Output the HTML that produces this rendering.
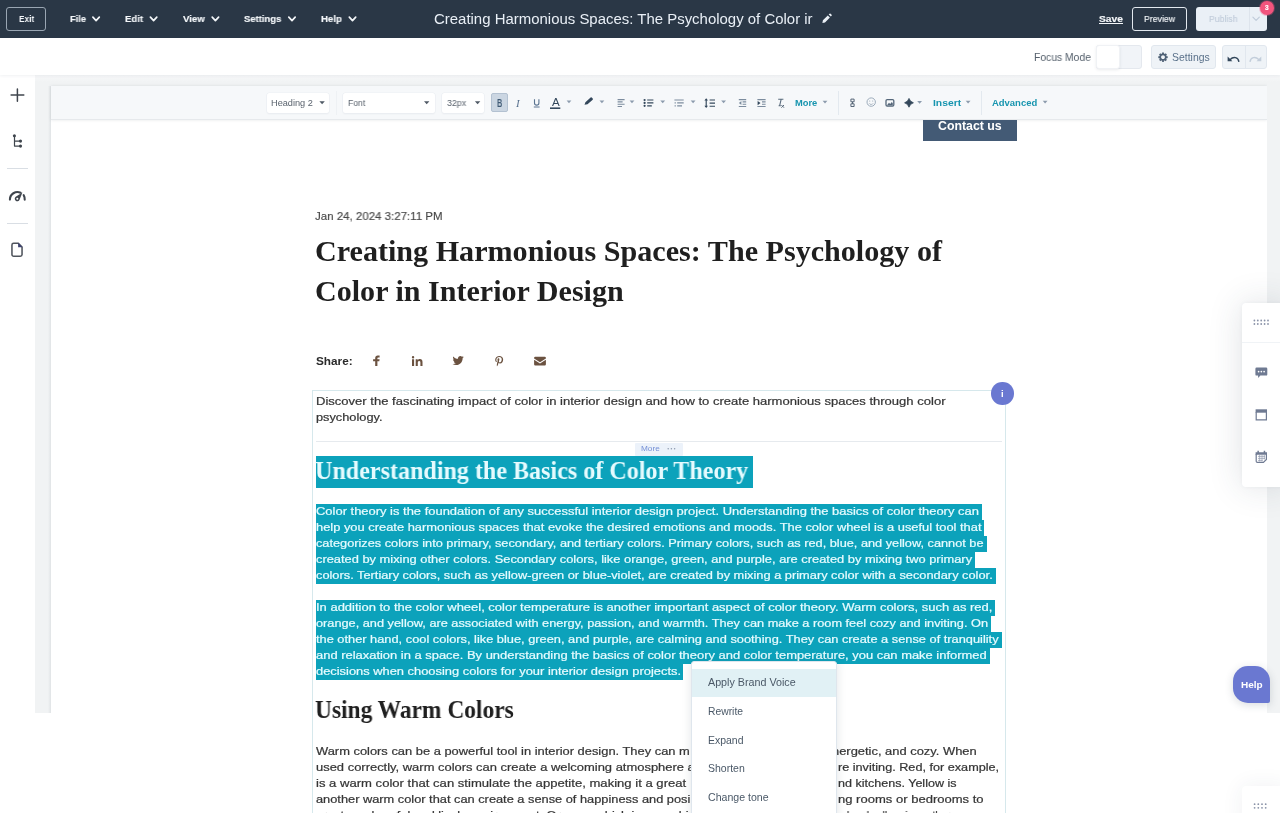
<!DOCTYPE html>
<html lang="en"><head><meta charset="utf-8"><title>Blog editor</title>
<style>
*{box-sizing:border-box;margin:0;padding:0}
html,body{width:1280px;height:813px;overflow:hidden;background:#fff}
body{position:relative;font-family:"Liberation Sans",sans-serif;color:#33475b;-webkit-font-smoothing:antialiased}
.abs{position:absolute}
.t{position:absolute;white-space:nowrap;line-height:16px;height:16px;will-change:transform}
svg{position:absolute;overflow:visible}

/* ---------- top bar ---------- */
#topbar{position:absolute;left:0;top:0;width:1280px;height:38px;background:#2a3746}
#topbar .t{color:#f3f6f9;font-size:9.8px;font-weight:700;-webkit-text-stroke:.15px currentColor}
.btn{position:absolute;border-radius:3px}
#exit{left:6px;top:7px;width:40px;height:24px;border:1px solid #9aa6b3}
#preview{left:1132px;top:7px;width:55px;height:24px;border:1px solid #e3e9ef}
#publish{position:absolute;left:1196px;top:7px;width:71px;height:24px;background:#eaf0f6;border-radius:3px}
#publish i{position:absolute;left:53px;top:0;width:1px;height:24px;background:#dde4ec}
#badge{position:absolute;left:1259.5px;top:.5px;width:14.5px;height:14.5px;border-radius:50%;background:#f2547d;box-shadow:0 0 0 1px rgba(242,84,125,.35)}

/* ---------- sub bar ---------- */
#subbar{position:absolute;left:0;top:38px;width:1280px;height:36.5px;background:#fff;box-shadow:0 1px 3px rgba(45,62,80,.07)}
#toggle{position:absolute;left:1096px;top:45px;width:46px;height:23.5px;border-radius:3px;background:#f1f4f8;border:1px solid #e4e8ee}
#toggle i{position:absolute;left:-1px;top:-1px;width:24px;height:23.5px;border-radius:3px;background:#fff;border:1px solid #f0f2f5;box-shadow:0 1px 3px rgba(45,62,80,.10)}
#settingsbtn{left:1151px;top:45px;width:65px;height:24px;background:#eff3f7;border:1px solid #e1e7ee}
#undoredo{left:1222px;top:45px;width:45px;height:24px;background:#eff3f7;border:1px solid #e1e7ee}
#undoredo i{position:absolute;left:22px;top:0;width:1px;height:22px;background:#e1e7ee}

/* ---------- workspace ---------- */
#work{position:absolute;left:0;top:75px;width:1280px;height:638px;background:linear-gradient(#f7f8f9,#f1f3f4 7px)}
#side{position:absolute;left:0;top:75px;width:35.2px;height:738px;background:#fff}
#side hr{position:absolute;left:7px;width:21px;height:1px;border:0;background:#d9dee4}
#page{position:absolute;left:50.5px;top:86px;width:1216.5px;height:727px;background:#fff}
.pshadow{position:absolute;top:86px;height:627px;width:3px}
#toolbar{position:absolute;left:50.5px;top:86px;width:1216.5px;height:34.2px;background:#f6f8fa;border-bottom:1px solid #e6e9ec;box-shadow:0 0 3px rgba(45,62,80,.13)}
.sel{position:absolute;top:92.8px;height:20.4px;background:#fff;border-radius:2.5px;box-shadow:0 0 0 .6px #eceff3,0 1px 2px rgba(45,62,80,.07)}
#toolbar-items .t{font-size:9.1px;color:#59626d}
.tsep{position:absolute;top:91px;width:1px;height:24px;background:#e3e9ef}
#bold{position:absolute;left:491px;top:93px;width:17px;height:19px;background:#cbd6e2;border:1px solid #b3c1d1;border-radius:2px}
.lnk{color:#1795af !important;font-weight:700}

/* ---------- content ---------- */
#contact{position:absolute;left:923px;top:120px;width:93.5px;height:21.2px;background:#435a75}
.body{font-size:11px;color:#363636;-webkit-text-stroke:.22px currentColor}
.serif{font-family:"Liberation Serif",serif;font-weight:700;color:#1f1f1f}
#module{position:absolute;left:312px;top:390px;width:694px;height:440px;border:1px solid #d6e8ec}
#mhr{position:absolute;left:316px;top:441px;width:686px;height:1px;background:#e6eaee}
#morebadge{position:absolute;left:634.5px;top:442.6px;width:48.6px;height:13px;background:#ecf2fa;border-radius:1px}
#info{position:absolute;left:991px;top:382px;width:22.5px;height:22.5px;border-radius:50%;background:#6a78d1}
.hl{position:absolute;background:#0ca2bb;height:16px}

.w{color:#fff !important}
.st{color:#e6fbfe !important}

/* ---------- menu ---------- */
#menu{position:absolute;left:690.5px;top:661px;width:146px;height:170px;background:#fff;border:1px solid #dfe6ed;border-radius:3px;box-shadow:0 1px 10px rgba(45,62,80,.14)}
#menu .hi{position:absolute;left:0;top:6.5px;width:144px;height:28.5px;background:#e1f1f5}
.mi{font-size:10.3px;color:#4a5867}

/* ---------- right ---------- */
#rgut{position:absolute;left:1267px;top:75px;width:13px;height:638px;background:linear-gradient(#f7f8f9,#f1f3f4 7px)}
#rpanel{position:absolute;left:1241.5px;top:302.5px;width:45px;height:184px;background:#fff;border-radius:4px;box-shadow:0 0 34px rgba(45,62,80,.15),0 0 4px rgba(45,62,80,.05)}
#rpanel hr{position:absolute;left:0;top:39px;width:45px;height:1px;border:0;background:#f0f3f6}
#rpanel2{position:absolute;left:1241.5px;top:786px;width:45px;height:60px;background:#fff;border-radius:4px;box-shadow:0 0 22px rgba(45,62,80,.07)}
#help{position:absolute;left:1233px;top:666px;width:36.5px;height:37px;background:#6a78d1;border-radius:15px 15px 2px 15px;box-shadow:0 2px 8px rgba(45,62,80,.18)}
</style></head>
<body>

<!-- workspace background + gutters -->
<div id="work"></div>
<div class="pshadow" style="left:47.5px;background:linear-gradient(90deg,rgba(45,62,80,0),rgba(45,62,80,.085))"></div>
<div class="pshadow" style="left:1267px;background:linear-gradient(270deg,rgba(45,62,80,0),rgba(45,62,80,.085))"></div>
<div id="page"></div>
<div id="toolbar"></div>
<div id="side">
  <hr style="top:93px"><hr style="top:148px">
</div>
<div id="rgut"></div>

<!-- top bar -->
<div id="topbar">
  <div id="exit" class="btn"></div>
  <span class="t" style="left: 18.5px; font-weight: 700; -webkit-text-stroke: 0px; transform: scaleX(0.8459); transform-origin: 0px 50%; top: 11.1px;">Exit</span>
  <span class="t" style="left: 69.5px; transform: scaleX(0.9473); transform-origin: 0px 50%; top: 11.1px;">File</span>
  <span class="t" style="left: 125px; transform: scaleX(0.9722); transform-origin: 0px 50%; top: 11.1px;">Edit</span>
  <span class="t" style="left: 182.7px; transform: scaleX(0.9839); transform-origin: 0px 50%; top: 11.1px;">View</span>
  <span class="t" style="left: 244.3px; transform: scaleX(0.9623); transform-origin: 0px 50%; top: 11.1px;">Settings</span>
  <span class="t" style="left: 321px; transform: scaleX(0.9795); transform-origin: 0px 50%; top: 11.1px;">Help</span>
  <span class="t" style="left: 434.4px; font-size: 14.7px; font-weight: 400; line-height: 20px; height: 20px; color: rgb(233, 239, 246); -webkit-text-stroke: 0px; transform: scaleX(1.0177); transform-origin: 0px 50%; top: 9.3px;">Creating Harmonious Spaces: The Psychology of Color ir</span>
  <span class="t" style="left: 1099px; text-decoration: underline; transform: scaleX(1.0485); transform-origin: 0px 50%; top: 11.1px;">Save</span>
  <div id="preview" class="btn"></div>
  <span class="t" style="left: 1144.3px; font-weight: 400; transform: scaleX(0.8922); transform-origin: 0px 50%; top: 11.1px;">Preview</span>
  <div id="publish"><i></i></div>
  <span class="t" style="left: 1208.5px; font-weight: 400; color: rgb(192, 204, 218); transform: scaleX(0.8867); transform-origin: 0px 50%; top: 11.1px;">Publish</span>
  <div id="badge"></div>
  <span class="t" style="left: 1264.6px; font-size: 6.5px; color: rgb(255, 255, 255); top: 0.2px;">3</span>
</div>

<!-- sub bar -->
<div id="subbar"></div>
<span class="t" style="left: 1033.6px; font-size: 10.6px; color: rgb(85, 96, 108); transform: scaleX(0.976); transform-origin: 0px 50%; top: 48.9px;">Focus Mode</span>
<div id="toggle"><i></i></div>
<div id="settingsbtn" class="btn"></div>
<span class="t" style="left: 1172px; font-size: 10.4px; color: rgb(90, 113, 138); transform: scaleX(1.0041); transform-origin: 0px 50%; top: 49.7px;">Settings</span>
<div id="undoredo" class="btn"><i></i></div>

<!-- toolbar items -->
<div id="toolbar-items">
  <div class="sel" style="left:266.6px;width:62.600px"></div>
  <span class="t" style="left: 270.5px; transform: scaleX(1.0104); transform-origin: 0px 50%; top: 95.3px;">Heading 2</span>
  <div class="tsep" style="left:336px;background:#eef1f4"></div>
  <div class="sel" style="left:343px;width:91.500px"></div>
  <span class="t" style="left: 347.7px; transform: scaleX(0.9504); transform-origin: 0px 50%; top: 95.3px;">Font</span>
  <div class="sel" style="left:441.800px;width:42.600px"></div>
  <span class="t" style="left: 446.9px; transform: scaleX(0.9679); transform-origin: 0px 50%; top: 95.3px;">32px</span>
  <div id="bold"></div>
  <span class="t lnk" style="left: 794.5px; font-size: 9.3px; transform: scaleX(1.0037); transform-origin: 0px 50%; top: 94.6px;">More</span>

  <span class="t" style="left: 496.9px; font-size: 10.2px; font-weight: 700; color: rgb(62, 89, 116); transform: scaleX(0.7202); transform-origin: 0px 50%; top: 95.5px;">B</span>
  <span class="t" style="left: 516.2px; font-family: &quot;Liberation Serif&quot;, serif; font-style: italic; font-size: 11px; color: rgb(90, 115, 144); top: 94.5px;">I</span>
  <span class="t" style="left: 551.9px; font-size: 11.3px; color: rgb(51, 71, 91); transform: scaleX(1.0203); transform-origin: 0px 50%; top: 93.5px;">A</span>
  <div class="tsep" style="left:837.5px"></div>
  <span class="t lnk" style="left: 932.6px; font-size: 9.3px; transform: scaleX(1.1094); transform-origin: 0px 50%; top: 94.6px;">Insert</span>
  <div class="tsep" style="left:981px"></div>
  <span class="t lnk" style="left: 991.8px; font-size: 9.3px; transform: scaleX(1.0172); transform-origin: 0px 50%; top: 94.6px;">Advanced</span>
</div>

<!-- blog content -->
<div id="contact"></div>
<span class="t w" style="left: 938px; font-size: 12px; font-weight: 700; transform: scaleX(1.0272); transform-origin: 0px 50%; top: 117.5px;">Contact us</span>

<span class="t" style="left: 315.4px; font-size: 11.6px; color: rgb(71, 71, 71); -webkit-text-stroke: 0.15px currentcolor; transform: scaleX(0.9914); transform-origin: 0px 50%; top: 208.1px;">Jan 24, 2024 3:27:11 PM</span>
<span class="t serif" style="left: 314.5px; font-size: 30px; line-height: 40px; height: 40px; transform: scaleX(1.0036); transform-origin: 0px 50%; top: 230.5px;">Creating Harmonious Spaces: The Psychology of</span>
<span class="t serif" style="left: 314.5px; font-size: 30px; line-height: 40px; height: 40px; transform: scaleX(1.0021); transform-origin: 0px 50%; top: 270.5px;">Color in Interior Design</span>
<span class="t" style="left: 315.5px; font-size: 11.6px; font-weight: 700; color: rgb(43, 43, 43); transform: scaleX(1.0168); transform-origin: 0px 50%; top: 353.2px;">Share:</span>

<div id="module"></div>
<div id="mhr"></div>
<div id="morebadge"></div>
<span class="t" style="left: 640.5px; font-size: 8px; color: rgb(117, 144, 214); transform: scaleX(1.031); transform-origin: 0px 50%; top: 441.3px;">More</span>
<div id="info"></div>
<span class="t w" style="left: 1000.7px; font-size: 9.5px; font-weight: 700; top: 385.5px;">i</span>

<span class="t body" style="left: 315.5px; transform: scaleX(1.1847); transform-origin: 0px 50%; top: 392.9px;">Discover the fascinating impact of color in interior design and how to create harmonious spaces through color</span>
<span class="t body" style="left: 315.5px; transform: scaleX(1.1609); transform-origin: 0px 50%; top: 408.9px;">psychology.</span>

<!-- selected heading -->
<div class="hl" style="left:315.5px;top:455.7px;width:437.8px;height:31.900px"></div>
<span class="t serif st" style="left: 315.3px; font-size: 24.5px; line-height: 32px; height: 32px; transform: scaleX(0.9827); transform-origin: 0px 50%; top: 454.6px;">Understanding the Basics of Color Theory</span>

<!-- selected paragraph 1 -->
<div class="hl" style="left:315.5px;top:504px;width:666.4px"></div>
<div class="hl" style="left:315.5px;top:520px;width:668.8px"></div>
<div class="hl" style="left:315.5px;top:536px;width:671px"></div>
<div class="hl" style="left:315.5px;top:552px;width:659.4px"></div>
<div class="hl" style="left:315.5px;top:568px;width:680px"></div>
<span class="t body st" style="left: 315.5px; transform: scaleX(1.1771); transform-origin: 0px 50%; top: 503px;">Color theory is the foundation of any successful interior design project. Understanding the basics of color theory can</span>
<span class="t body st" style="left: 315.5px; transform: scaleX(1.1707); transform-origin: 0px 50%; top: 519px;">help you create harmonious spaces that evoke the desired emotions and moods. The color wheel is a useful tool that</span>
<span class="t body st" style="left: 315.5px; transform: scaleX(1.1586); transform-origin: 0px 50%; top: 535px;">categorizes colors into primary, secondary, and tertiary colors. Primary colors, such as red, blue, and yellow, cannot be</span>
<span class="t body st" style="left: 315.5px; transform: scaleX(1.1689); transform-origin: 0px 50%; top: 551px;">created by mixing other colors. Secondary colors, like orange, green, and purple, are created by mixing two primary</span>
<span class="t body st" style="left: 315.5px; transform: scaleX(1.1643); transform-origin: 0px 50%; top: 567px;">colors. Tertiary colors, such as yellow-green or blue-violet, are created by mixing a primary color with a secondary color.</span>

<!-- selected paragraph 2 -->
<div class="hl" style="left:315.5px;top:600px;width:679.5px"></div>
<div class="hl" style="left:315.5px;top:616px;width:675.8px"></div>
<div class="hl" style="left:315.5px;top:632px;width:686.3px"></div>
<div class="hl" style="left:315.5px;top:648px;width:674.5px"></div>
<div class="hl" style="left:315.5px;top:664px;width:367.2px"></div>
<span class="t body st" style="left: 315.5px; transform: scaleX(1.1794); transform-origin: 0px 50%; top: 599px;">In addition to the color wheel, color temperature is another important aspect of color theory. Warm colors, such as red,</span>
<span class="t body st" style="left: 315.5px; transform: scaleX(1.1589); transform-origin: 0px 50%; top: 615px;">orange, and yellow, are associated with energy, passion, and warmth. They can make a room feel cozy and inviting. On</span>
<span class="t body st" style="left: 315.5px; transform: scaleX(1.1644); transform-origin: 0px 50%; top: 631px;">the other hand, cool colors, like blue, green, and purple, are calming and soothing. They can create a sense of tranquility</span>
<span class="t body st" style="left: 315.5px; transform: scaleX(1.1756); transform-origin: 0px 50%; top: 647px;">and relaxation in a space. By understanding the basics of color theory and color temperature, you can make informed</span>
<span class="t body st" style="left: 315.5px; transform: scaleX(1.1705); transform-origin: 0px 50%; top: 663px;">decisions when choosing colors for your interior design projects.</span>

<span class="t serif" style="left: 315.3px; font-size: 24.5px; line-height: 32px; height: 32px; transform: scaleX(0.9562); transform-origin: 0px 50%; top: 694.4px;">Using Warm Colors</span>

<!-- paragraph 3 (middle of each line is hidden behind the menu) -->
<span class="t body" style="left: 315.5px; transform: scaleX(1.1712); transform-origin: 0px 50%; top: 743px;">Warm colors can be a powerful tool in interior design. They can m</span>
<span class="t body" style="left: 832.3px; transform: scaleX(1.1734); transform-origin: 0px 50%; top: 743px;">nergetic, and cozy. When</span>
<span class="t body" style="left: 315.5px; transform: scaleX(1.1764); transform-origin: 0px 50%; top: 759px;">used correctly, warm colors can create a welcoming atmosphere a</span>
<span class="t body" style="left: 837.7px; transform: scaleX(1.1506); transform-origin: 0px 50%; top: 759px;">re inviting. Red, for example,</span>
<span class="t body" style="left: 315.5px; transform: scaleX(1.1895); transform-origin: 0px 50%; top: 775px;">is a warm color that can stimulate the appetite, making it a great</span>
<span class="t body" style="left: 837.7px; transform: scaleX(1.1399); transform-origin: 0px 50%; top: 775px;">nd kitchens. Yellow is</span>
<span class="t body" style="left: 315.5px; transform: scaleX(1.1637); transform-origin: 0px 50%; top: 791px;">another warm color that can create a sense of happiness and posi</span>
<span class="t body" style="left: 837.7px; transform: scaleX(1.1848); transform-origin: 0px 50%; top: 791px;">ng rooms or bedrooms to</span>
<span class="t body" style="left: 315.5px; transform: scaleX(1.1495); transform-origin: 0px 50%; top: 807px;">create a cheerful and lively environment. Orange, which is a combi</span>
<span class="t body" style="left: 838px; transform: scaleX(0.9249); transform-origin: 0px 50%; top: 807px;">ed and yellow, is another</span>

<!-- AI dropdown menu -->
<div id="menu"><div class="hi"></div></div>
<span class="t mi" style="left: 708px; transform: scaleX(1.0421); transform-origin: 0px 50%; top: 675px;">Apply Brand Voice</span>
<span class="t mi" style="left: 708px; transform: scaleX(1.0027); transform-origin: 0px 50%; top: 703.8px;">Rewrite</span>
<span class="t mi" style="left: 708px; transform: scaleX(1.0161); transform-origin: 0px 50%; top: 732.6px;">Expand</span>
<span class="t mi" style="left: 708px; transform: scaleX(1.02); transform-origin: 0px 50%; top: 761.4px;">Shorten</span>
<span class="t mi" style="left: 708px; transform: scaleX(1.0274); transform-origin: 0px 50%; top: 790.2px;">Change tone</span>

<!-- right floating panels -->
<div id="rpanel"><hr></div>
<div id="rpanel2"></div>
<div id="help"></div>
<span class="t w" style="left: 1240.7px; font-size: 9.7px; font-weight: 700; transform: scaleX(1.0333); transform-origin: 0px 50%; top: 676.9px;">Help</span>


<!-- icon overlay: all coordinates are page pixels -->
<svg id="icons" style="left:0;top:0" width="1280" height="813" viewBox="0 0 1280 813">
 <!-- top bar chevrons -->
 <g fill="none" stroke="#f3f6f9" stroke-width="1.700" stroke-linecap="round" stroke-linejoin="round">
  <path d="M92.900 17.200 l3.200 3.400 3.200-3.400"></path><path d="M150.400 17.200 l3.200 3.400 3.200-3.400"></path><path d="M212.200 17.200 l3.200 3.400 3.200-3.400"></path>
  <path d="M288.800 17.200 l3.200 3.400 3.200-3.400"></path><path d="M349.300 17.200 l3.200 3.400 3.200-3.400"></path>
 </g>
 <path d="M1252.900 17.100 l3.200 3.200 3.200-3.200" fill="none" stroke="#c0ccda" stroke-width="1.200" stroke-linecap="round" stroke-linejoin="round"></path>
 <!-- title pencil -->
 <path d="M822.4 22.9 l.5-2.6 4.9-4.9 2.1 2.1 -4.9 4.9z M828.7 14.5 l.8-.8 a.8.8 0 0 1 1.1 0 l1 1 a.8.8 0 0 1 0 1.1 l-.8.8z" fill="#eaf0f6"></path>

 <!-- sub bar: gear, undo, redo -->
 <g transform="translate(1163,57.2)" fill="#4f6176">
  <circle r="2.75" fill="none" stroke="#4f6176" stroke-width="1.7"></circle>
  <rect x="-.95" y="-4.7" width="1.9" height="1.7"></rect><rect x="-.95" y="-4.7" width="1.9" height="1.7" transform="rotate(45)"></rect>
  <rect x="-.95" y="-4.7" width="1.9" height="1.7" transform="rotate(90)"></rect><rect x="-.95" y="-4.7" width="1.9" height="1.7" transform="rotate(135)"></rect>
  <rect x="-.95" y="-4.7" width="1.9" height="1.7" transform="rotate(180)"></rect><rect x="-.95" y="-4.7" width="1.9" height="1.7" transform="rotate(225)"></rect>
  <rect x="-.95" y="-4.7" width="1.9" height="1.7" transform="rotate(270)"></rect><rect x="-.95" y="-4.7" width="1.9" height="1.7" transform="rotate(315)"></rect>
 </g>
 <g id="undo">
  <path d="M1230.2 59.4 c1.6-1.6 3.6-2.2 5.3-1.8 1.8.4 3 1.8 3.3 3.7" fill="none" stroke="#33475b" stroke-width="1.45" stroke-linecap="round"></path>
  <path d="M1227.6 56.5 v4.8 h4.8z" fill="#33475b"></path>
 </g>
 <g transform="translate(2488.9,0) scale(-1,1)">
  <path d="M1230.2 59.4 c1.6-1.6 3.6-2.2 5.3-1.8 1.8.4 3 1.8 3.3 3.7" fill="none" stroke="#c3cedb" stroke-width="1.45" stroke-linecap="round"></path>
  <path d="M1227.6 56.5 v4.8 h4.8z" fill="#c3cedb"></path>
 </g>

 <!-- left sidebar -->
 <g fill="none" stroke="#3f454d" stroke-linecap="round">
  <path d="M17.4 88.9 v12.3 M11.1 95.1 h12.7" stroke-width="1.5"></path>
  <path d="M14.5 136 v10.1 h5.6 M14.5 141.1 h5.6" stroke-width="1.2" stroke-linejoin="round"></path>
  <path d="M9.9 199.6 A7.6 7.6 0 0 1 20.6 192.700" stroke-width="2.1"></path>
  <path d="M23.700 195.200 A7.6 7.6 0 0 1 24.700 199.600" stroke-width="2.100"></path>
  <path d="M11.950 245 a1.700 1.700 0 0 1 1.700-1.700 h4.700 l3.700 3.700 v7.500 a1.700 1.700 0 0 1 -1.700 1.700 h-6.700 a1.700 1.700 0 0 1 -1.700-1.700z" stroke-width="1.550" stroke-linejoin="round" stroke="#50555d"></path>
 </g>
 <g fill="#3f454d">
  <circle cx="14.400" cy="135.800" r="1.550"></circle><circle cx="20.500" cy="141.100" r="1.550"></circle><circle cx="20.500" cy="146.100" r="1.550"></circle>
  <path d="M22.400 192.500 L19.550 199.700 A2.500 2.500 0 1 1 15.700 196.800 Z"></path>
  <path d="M18.100 242.800 l4.500 4.500 h-4.500z" fill="#3d4270"></path>
 </g>
 <circle cx="17.300" cy="198.700" r="1" fill="#fff"></circle>

 <!-- toolbar: select carets -->
 <g fill="#4f5965">
  <path d="M319.4 101.2 h5.4 l-2.7 3.1z"></path><path d="M424 101.2 h5.4 l-2.7 3.1z"></path><path d="M474.9 101.2 h5.4 l-2.7 3.1z"></path>
 </g>
 <!-- toolbar: small grey carets -->
 <g fill="#8c9bad">
  <path d="M566.6 100.6 h4.8 l-2.4 2.7z"></path><path d="M599.5 100.6 h4.8 l-2.4 2.7z"></path><path d="M629.6 100.6 h4.8 l-2.4 2.7z"></path>
  <path d="M660.3 100.6 h4.8 l-2.4 2.7z"></path><path d="M690.7 100.6 h4.8 l-2.4 2.7z"></path><path d="M721.2 100.6 h4.8 l-2.4 2.7z"></path>
  <path d="M822.6 100.8 h4.8 l-2.4 2.7z"></path><path d="M917.2 101 h4.8 l-2.4 2.7z"></path><path d="M965.7 100.8 h4.8 l-2.4 2.7z"></path><path d="M1042.7 100.8 h4.8 l-2.4 2.7z"></path>
 </g>
 <!-- U underline -->
 <path d="M534.5 99.2 v3.7 a2.2 2.2 0 0 0 4.4 0 v-3.7 M533.8 107 h5.8" fill="none" stroke="#5a7390" stroke-width="1.1"></path>
 <!-- A colour bar -->
 <rect x="550" y="107.4" width="10.3" height="1.6" fill="#33475b"></rect>
 <!-- highlighter -->
 <path d="M584.5 104.7 l.9-2.4 5.2-4.8 a.8.8 0 0 1 1.1 0 l1 1.1 a.8.8 0 0 1 0 1.1 l-5.2 4.6z" fill="#33475b"></path>
 <!-- align -->
 <path d="M617.6 99.6 h7 M617.6 101.9 h5 M617.6 104.2 h7 M617.6 106.5 h4.4" stroke="#7c8c9e" stroke-width="1.1" fill="none"></path>
 <!-- bullet list -->
 <g fill="#33475b"><circle cx="644.6" cy="100" r="1.1"></circle><circle cx="644.6" cy="102.9" r="1.1"></circle><circle cx="644.6" cy="105.8" r="1.1"></circle></g>
 <path d="M647.2 100 h6.2 M647.2 102.9 h6.2 M647.2 105.8 h4.6" stroke="#33475b" stroke-width="1.15" fill="none"></path>
 <!-- indent list -->
 <path d="M674.4 100 h9.3 M677.2 102.9 h6.5 M677.2 105.8 h4.8 M674.6 102.9 h1.2 M674.6 105.8 h1.2" stroke="#7c8c9e" stroke-width="1.2" fill="none"></path>
 <!-- line height -->
 <path d="M706.2 99.4 v7.6 M709.6 100 h5.4 M709.6 103.1 h5.4 M709.6 106.2 h5.4" stroke="#33475b" stroke-width="1.15" fill="none"></path>
 <path d="M704.4 100.6 l1.8-2.3 1.8 2.3z M704.4 105.8 l1.8 2.3 1.8-2.3z" fill="#33475b"></path>
 <!-- outdent -->
 <path d="M738.8 99.6 h7.4 M742.6 101.9 h3.6 M742.6 104.2 h3.6 M738.8 106.5 h7.4" stroke="#7c8c9e" stroke-width="1.1" fill="none"></path>
 <path d="M741.4 101 v4.1 l-2.6-2.05z" fill="#7c8c9e"></path>
 <!-- indent -->
 <path d="M757.4 99.6 h8.2 M762 101.9 h3.6 M762 104.2 h3.6 M757.4 106.5 h8.2" stroke="#7c8c9e" stroke-width="1.1" fill="none"></path>
 <path d="M757.6 100.9 v4.3 l2.9-2.15z" fill="#33475b"></path>
 <!-- clear formatting Tx -->
 <path d="M778.2 99.2 h5.2 M781.2 99.2 l-1.6 6.6 M778.6 105.8 h2.2" stroke="#5a6b7d" stroke-width="1.1" fill="none"></path>
 <path d="M781.4 105 l2.6 2.7 M784 105 l-2.6 2.7" stroke="#5a6b7d" stroke-width="1" fill="none"></path>
 <!-- anchor -->
 <path d="M850.900 99.100 h3.200 v2.700 h-3.200z M850.900 103.800 h3.200 v2.700 h-3.200z M852.500 101.800 v2" stroke="#46576a" stroke-width=".9" fill="none"></path>
 <!-- emoji -->
 <circle cx="871.2" cy="102.1" r="4.2" fill="none" stroke="#9aa9b9" stroke-width="1"></circle>
 <circle cx="869.7" cy="101" r=".6" fill="#9aa9b9"></circle><circle cx="872.7" cy="101" r=".6" fill="#9aa9b9"></circle>
 <path d="M869.2 103.3 a2.3 2.3 0 0 0 4 0" fill="none" stroke="#9aa9b9" stroke-width=".8"></path>
 <!-- image -->
 <rect x="886" y="99.6" width="7.8" height="6.4" rx="1.2" fill="none" stroke="#55677a" stroke-width="1.3"></rect>
 <path d="M887.2 105 l1.8-2.2 1.2 1.2 1.6-2 1 1.2 v1.8z" fill="#55677a"></path>
 <!-- sparkle -->
 <path d="M909 98.4 Q910 101.8 913.4 102.8 Q910 103.8 909 107.2 Q908 103.8 904.6 102.8 Q908 101.8 909 98.4z" fill="#33475b" stroke="#33475b" stroke-width=".8" stroke-linejoin="round"></path>

 <!-- share icons -->
 <g fill="#6b5240">
  <path d="M375.2 366 v-4.8 h-2.1 v-2 h2.1 v-1.3 c0-1.6 1-2.5 2.5-2.5 .7 0 1.500.1 1.900.2 v1.800 h-1.100 c-.8 0-1.100.400-1.100 1 v.8 h2.200 l-.3 2 h-1.900 v4.800z"></path>
  <path d="M412 359.300 h2.100 v6.700 h-2.100z M413.050 356 a1.200 1.200 0 1 1 0 2.400 a1.200 1.200 0 0 1 0-2.400z M415.700 359.300 h2 v.9 c.4-.7 1.200-1.100 2.200-1.100 2.100 0 2.600 1.300 2.600 3.100 v3.800 h-2.100 v-3.300 c0-.8 0-1.800-1.200-1.800 s-1.400.900-1.400 1.800 v3.300 h-2.100z"></path>
  <g transform="translate(452.5,354.900) scale(0.02197)"><path d="M459.37 151.716c.325 4.548.325 9.097.325 13.645 0 138.720-105.583 298.558-298.558 298.558-59.452 0-114.680-17.219-161.137-47.106 8.447.974 16.568 1.299 25.340 1.299 49.055 0 94.213-16.568 130.274-44.832-46.132-.975-84.792-31.188-98.112-72.772 6.498.974 12.995 1.624 19.818 1.624 9.421 0 18.843-1.300 27.614-3.573-48.081-9.747-84.143-51.980-84.143-102.985v-1.299c13.969 7.797 30.214 12.670 47.431 13.319-28.264-18.843-46.781-51.005-46.781-87.391 0-19.492 5.197-37.360 14.294-52.954 51.655 63.675 129.300 105.258 216.365 109.807-1.624-7.797-2.599-15.918-2.599-24.040 0-57.828 46.782-104.934 104.934-104.934 30.213 0 57.502 12.670 76.670 33.137 23.715-4.548 46.456-13.320 66.599-25.340-7.798 24.366-24.366 44.833-46.132 57.827 21.117-2.273 41.584-8.122 60.426-16.243-14.292 20.791-32.161 39.308-52.628 54.253z"></path></g>
  <g transform="translate(495.200,355.900) scale(0.02070)"><path d="M204 6.500C101.400 6.500 0 74.900 0 185.600 0 256 39.600 296 63.600 296c9.900 0 15.600-27.600 15.600-35.400 0-9.300-23.700-29.100-23.700-67.800 0-80.400 61.200-137.400 140.400-137.400 68.100 0 118.500 38.700 118.500 109.800 0 53.100-21.300 152.700-90.300 152.700-24.900 0-46.200-18-46.200-43.800 0-37.800 26.400-74.400 26.400-113.400 0-66.200-93.900-54.200-93.900 25.800 0 16.800 2.100 35.400 9.600 50.700-13.800 59.400-42 147.900-42 209.100 0 18.900 2.700 37.500 4.500 56.400 3.400 3.800 1.700 3.400 6.900 1.500 50.400-69 48.600-82.500 71.400-172.800 12.300 23.400 44.100 36 69.300 36 106.200 0 153.900-103.500 153.900-196.800C384 71.300 298.200 6.500 204 6.500z"></path></g>
  <path d="M535.300 356.800 h9.400 a1.200 1.200 0 0 1 1.200 1.200 v.5 l-5.900 3.700 -5.900-3.700 v-.5 a1.200 1.200 0 0 1 1.200-1.200z M534.100 359.700 l5.900 3.700 5.900-3.700 v4.600 a1.200 1.200 0 0 1 -1.200 1.200 h-9.400 a1.200 1.200 0 0 1 -1.200-1.200z"></path>
 </g>

 <!-- "More ..." dots -->
 <g fill="#8d99ad"><circle cx="668.2" cy="448.700" r=".75"></circle><circle cx="671.400" cy="448.700" r=".75"></circle><circle cx="674.600" cy="448.700" r=".75"></circle></g>

 <!-- right panel -->
 <g fill="#8a93a8">
  <circle cx="1254.400" cy="320.500" r=".9"></circle><circle cx="1257.800" cy="320.500" r=".9"></circle><circle cx="1261.200" cy="320.500" r=".9"></circle><circle cx="1264.600" cy="320.500" r=".9"></circle><circle cx="1268" cy="320.500" r=".9"></circle>
  <circle cx="1254.400" cy="324" r=".9"></circle><circle cx="1257.800" cy="324" r=".9"></circle><circle cx="1261.200" cy="324" r=".9"></circle><circle cx="1264.600" cy="324" r=".9"></circle><circle cx="1268" cy="324" r=".9"></circle>
  <circle cx="1254.600" cy="804.200" r=".9"></circle><circle cx="1258.300" cy="804.200" r=".9"></circle><circle cx="1262" cy="804.200" r=".9"></circle><circle cx="1265.700" cy="804.200" r=".9"></circle>
  <circle cx="1254.600" cy="807.800" r=".9"></circle><circle cx="1258.300" cy="807.800" r=".9"></circle><circle cx="1262" cy="807.800" r=".9"></circle><circle cx="1265.700" cy="807.800" r=".9"></circle>
 </g>
 <g fill="#6f7a92">
  <path d="M1256.600 367.600 h9.500 a1.200 1.200 0 0 1 1.200 1.200 v5.600 a1.200 1.200 0 0 1 -1.200 1.200 h-5.700 l-2.300 2.300 v-2.300 h-1.500 a1.200 1.200 0 0 1 -1.200-1.200 v-5.600 a1.200 1.200 0 0 1 1.200-1.200z"></path>
  <path d="M1255.600 409.300 h11.400 v3.400 h-11.400z"></path>
  <path d="M1257.400 450.800 h1.500 v2 h-1.500z M1263.700 450.800 h1.500 v2 h-1.500z M1255.600 452.200 h11.400 v2.600 h-11.400z"></path>
 </g>
 <g fill="#fff"><circle cx="1258.600" cy="371.600" r=".85"></circle><circle cx="1261.350" cy="371.600" r=".85"></circle><circle cx="1264.100" cy="371.600" r=".85"></circle></g>
 <path d="M1256.200 412 v7.900 h10.200 v-7.900" fill="none" stroke="#6f7a92" stroke-width="1.200"></path>
 <path d="M1256.200 454 v7.200 a1.200 1.200 0 0 0 1.200 1.200 h6 l3-3 v-5.400" fill="none" stroke="#6f7a92" stroke-width="1.200"></path>
 <path d="M1258 456.400 h7 M1258 458.400 h7 M1258 460.400 h4.600 M1259.700 455 v6.500 M1262 455 v6.500 M1264.300 455 v4.500" fill="none" stroke="#8f99ad" stroke-width=".7"></path>
</svg>


</body></html>
